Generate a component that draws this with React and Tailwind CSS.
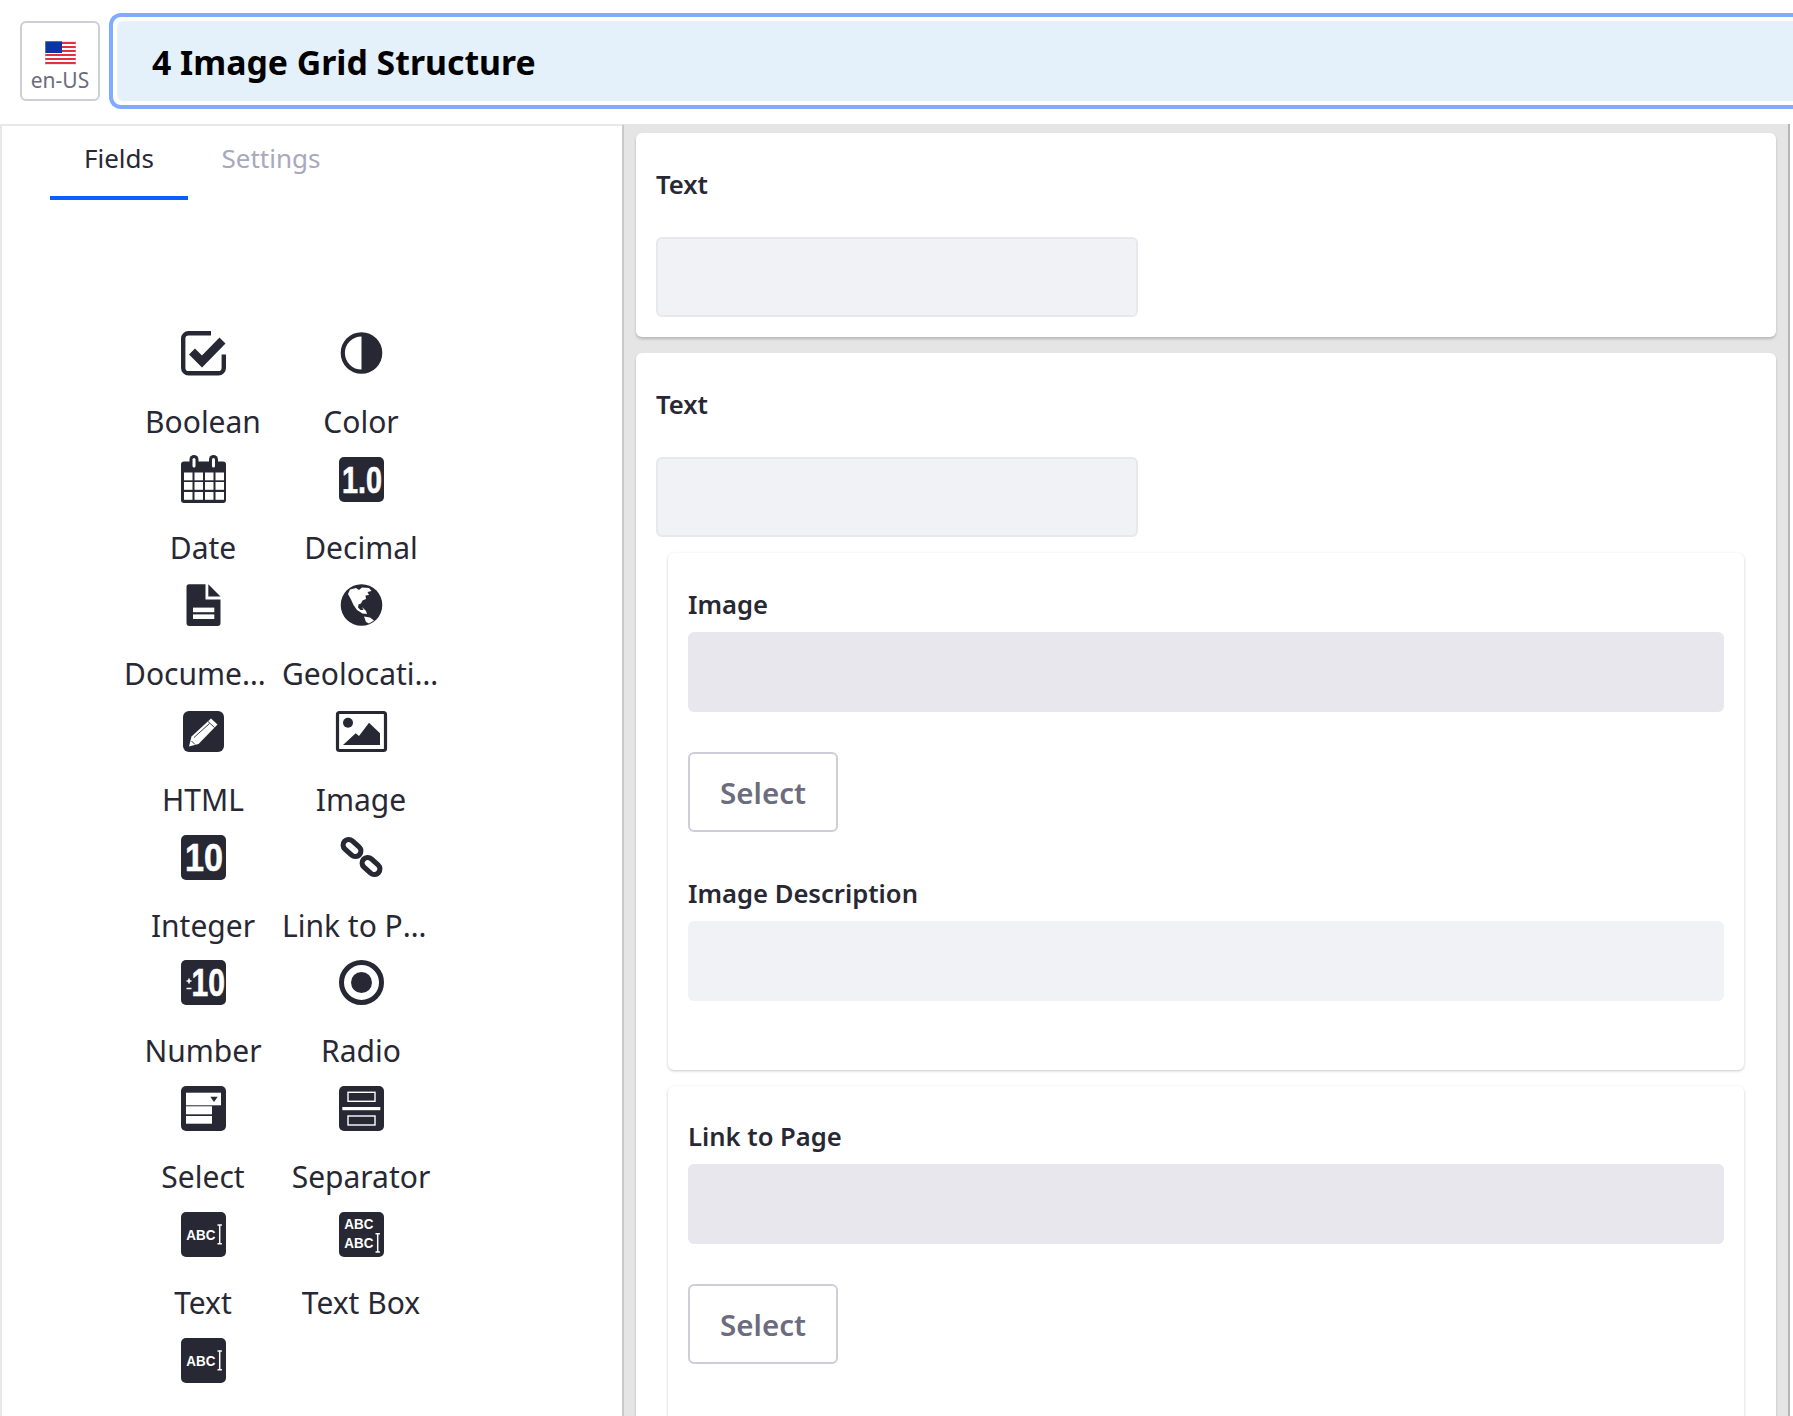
const D = "#272833";

function Svg({ children }) {
  return (
    <svg width="45" height="45" viewBox="0 0 45 45" className="overflow-visible block" fill={D}>
      {children}
    </svg>
  );
}
const Sq = ({ x = 0, s = 45, y = 0 }) => <rect x={x} y={y} width={s} height={s} rx="5" fill={D} />;
const T = (p) => <text fill="#fff" fontFamily="Liberation Sans" fontWeight="700" lengthAdjust="spacingAndGlyphs" {...p} />;
const Big = (p) => <T stroke="#fff" strokeWidth="0.6" {...p} />;
const Cursor = ({ y1, y2 }) => (
  <path d={`M36.5 ${y1}h4.4M38.7 ${y1}V${y2}M36.5 ${y2}h4.4`} stroke="#fff" strokeWidth="1.5" fill="none" />
);

const icons = {
  boolean: (
    <Svg>
      <path d="M30 2.2H7.5a5.3 5.3 0 0 0-5.3 5.3v29.5a5.3 5.3 0 0 0 5.3 5.3h30a5.3 5.3 0 0 0 5.3-5.3V23.5" fill="none" stroke={D} strokeWidth="4.4" />
      <path d="M11 20.5L21 30.5L41.5 9.5" fill="none" stroke={D} strokeWidth="8.4" />
    </Svg>
  ),
  color: (
    <Svg>
      <circle cx="22.5" cy="22" r="18.7" fill="none" stroke={D} strokeWidth="4.2" />
      <path d="M22.5 3.3a18.7 18.7 0 0 1 0 37.4z" />
    </Svg>
  ),
  date: (
    <Svg>
      <rect x="0" y="4.5" width="45" height="41.5" rx="3" />
      <rect x="8.5" y="-2" width="9" height="13" rx="4.5" />
      <rect x="28" y="-2" width="9" height="13" rx="4.5" />
      <rect x="11.5" y="1" width="3" height="9.5" rx="1.5" fill="#fff" />
      <rect x="31" y="1" width="3" height="9.5" rx="1.5" fill="#fff" />
      {[15.5, 25, 35].map((y) =>
        [3, 13.5, 24, 34.5].map((x) => <rect key={`${x}-${y}`} x={x} y={y} width="8.5" height="7.8" fill="#fff" />)
      )}
    </Svg>
  ),
  decimal: (
    <Svg>
      <Sq />
      <Big x="3" y="36" fontSize="37" textLength="40">1.0</Big>
    </Svg>
  ),
  document: (
    <Svg>
      <path d="M8 1.3H24.5V16.5H39.5V40a3 3 0 0 1-3 3H8.5a3 3 0 0 1-3-3V3.8a2.5 2.5 0 0 1 2.5-2.5z" />
      <path d="M27.3 1.3L39.5 13.5H27.3z" />
      <rect x="12" y="24.6" width="21.3" height="4.6" fill="#fff" />
      <rect x="12" y="31.4" width="21.3" height="4.6" fill="#fff" />
    </Svg>
  ),
  geo: (
    <Svg>
      <circle cx="22.5" cy="22" r="20.8" />
      <path d="M11 6.5L17 5L20 7L23 4.5L30 5L32.5 8L28.5 9L30 12L26.5 12.5L27 16L23.5 17.5L22 20.5L19.5 21.5L19 24.5L21.5 27L24.5 27L23 24L27 28L28 31L23.5 30.5L18 27L14.5 22L12 16.5L9 11z" fill="#fff" />
      <path d="M25 33.5L31 34.5L35 37.5L30 40.5L27 39z" fill="#fff" />
    </Svg>
  ),
  html: (
    <Svg>
      <rect x="2" y="2" width="41" height="41" rx="6" />
      <path d="M8 37.5L10.5 27.5L30 9.5L36.5 15.5L17.5 35z" fill="#fff" />
      <path d="M13 28.5L28.5 14.5M27 12.5L33.5 18.5M10.5 32L14 35.5" stroke={D} strokeWidth="0.9" fill="none" />
    </Svg>
  ),
  image: (
    <Svg>
      <rect x="-1.5" y="3.5" width="48" height="38" rx="2" fill="none" stroke={D} strokeWidth="3.2" />
      <circle cx="9" cy="13.7" r="5" />
      <path d="M4 36L16.7 24.3L20 27L30 13.7L41 24.3V36z" />
    </Svg>
  ),
  integer: (
    <Svg>
      <Sq />
      <Big x="4" y="36" fontSize="38" textLength="38">10</Big>
    </Svg>
  ),
  link: (
    <Svg>
      <rect x="3" y="7.5" width="20" height="11" rx="5.5" transform="rotate(42 13 13)" fill="none" stroke={D} strokeWidth="5.2" />
      <rect x="22" y="25.5" width="20" height="11" rx="5.5" transform="rotate(42 32 31)" fill="none" stroke={D} strokeWidth="5.2" />
    </Svg>
  ),
  number: (
    <Svg>
      <Sq />
      <Big x="10.5" y="36" fontSize="38" textLength="33.5">10</Big>
      <path d="M5.5 21h5M8 18.5v5M5.5 28.5h5" stroke="#fff" strokeWidth="1.6" fill="none" />
    </Svg>
  ),
  radio: (
    <Svg>
      <circle cx="22.5" cy="22.5" r="20" fill="none" stroke={D} strokeWidth="5" />
      <circle cx="22.5" cy="22.5" r="10.5" />
    </Svg>
  ),
  select: (
    <Svg>
      <Sq />
      <rect x="5" y="6.7" width="35" height="12.6" fill="#fff" />
      <path d="M29.3 10.7h7.4l-3.7 5.3z" />
      <rect x="5" y="20.3" width="26" height="8" fill="#fff" />
      <rect x="5" y="30" width="26" height="7.7" fill="#fff" />
    </Svg>
  ),
  separator: (
    <Svg>
      <Sq />
      <rect x="9" y="6.3" width="27" height="9" fill="none" stroke="#fff" strokeWidth="1.4" />
      <rect x="3.3" y="21" width="38" height="3.2" fill="#fff" />
      <rect x="9" y="30" width="27" height="9" fill="none" stroke="#fff" strokeWidth="1.4" />
    </Svg>
  ),
  text: (
    <Svg>
      <Sq />
      <T x="5.3" y="27.5" fontSize="15" textLength="29">ABC</T>
      <Cursor y1={13} y2={31.7} />
    </Svg>
  ),
  textbox: (
    <Svg>
      <Sq />
      <T x="5.3" y="17.3" fontSize="15" textLength="29">ABC</T>
      <T x="5.3" y="36" fontSize="15" textLength="29">ABC</T>
      <Cursor y1={21.7} y2={40} />
    </Svg>
  ),
};

const fields = [
  ["boolean", "Boolean"],
  ["color", "Color"],
  ["date", "Date"],
  ["decimal", "Decimal"],
  ["document", "Documents and Media"],
  ["geo", "Geolocation"],
  ["html", "HTML"],
  ["image", "Image"],
  ["integer", "Integer"],
  ["link", "Link to Page"],
  ["number", "Number"],
  ["radio", "Radio"],
  ["select", "Select"],
  ["separator", "Separator"],
  ["text", "Text"],
  ["textbox", "Text Box"],
  ["text", ""],
];

function Field({ icon, label }) {
  return (
    <div className="h-[125.9px] w-[158px]">
      <div className="flex justify-center">{icons[icon]}</div>
      {label && (
        <div className="mt-[26px] truncate text-center text-[30px] leading-[40px] text-[#272833]">{label}</div>
      )}
    </div>
  );
}

const Label = ({ children, className = "" }) => (
  <div className={`text-[25.6px] font-semibold leading-[32px] text-[#272833] ${className}`}>{children}</div>
);
const Input = ({ className = "" }) => (
  <div className={`h-[80px] rounded-md border-2 border-[#e7e7ed] bg-[#f1f2f5] ${className}`} />
);
const SelectBtn = ({ className = "" }) => (
  <div className={`flex h-[80px] w-[150px] items-center justify-center rounded-md border-2 border-[#cdced9] bg-white pt-[2px] text-[29.5px] font-semibold text-[#6b6c7e] ${className}`}>
    Select
  </div>
);

export default function App() {
  return (
    <div className="flex h-[1416px] w-[1793px] flex-col overflow-hidden bg-white font-['Noto_Sans',sans-serif]">
      <header className="flex h-[124px] shrink-0 items-center pb-[3px]">
        <div className="ml-[20px] flex h-[80px] w-[80px] shrink-0 flex-col items-center rounded-md border-2 border-[#cdced9] pt-[18px]">
          <svg width="31" height="24" viewBox="0 0 31 24" className="block">
            <rect width="31" height="24" fill="#fff" />
            {[0, 4, 8, 12, 16, 20].map((y) => (
              <rect key={y} y={y + 1} width="31" height="2" fill="#e0323c" />
            ))}
            <rect width="17" height="12" fill="#0b34a4" />
            <rect width="31" height="24" fill="none" stroke="#c9c9d2" strokeWidth="0.8" />
          </svg>
          <div className="mt-[1px] text-[21px] leading-[28px] text-[#6b6c7e]">en-US</div>
        </div>
        <div className="ml-[9px] h-[96px] flex-1 rounded-l-xl border-y-4 border-l-4 border-[#80acff] p-1 pr-0">
          <div className="flex h-full items-center rounded-l-md bg-[#e4f0fa] pl-[35px] pt-[4px] text-[33.8px] font-bold text-black">
            4 Image Grid Structure
          </div>
        </div>
      </header>
      <div className="flex min-h-0 flex-1">
        <aside className="w-[624px] shrink-0 border-t-2 border-l-2 border-r-2 border-t-[#e7e7ed] border-l-[#e7e7ed] border-r-[#c8c8c8]">
          <nav className="ml-[48px] flex h-[74px] text-[26px]">
            <div className="flex w-[138px] items-center justify-center border-b-4 border-[#0b5fff] pb-[6px] text-[#272833]">Fields</div>
            <div className="flex w-[166px] items-center justify-center pb-[10px] text-[#a7a9bc]">Settings</div>
          </nav>
          <div className="ml-[122px] mt-[131px] grid grid-cols-[158px_158px]">
            {fields.map(([icon, label], i) => (
              <Field key={i} icon={icon} label={label} />
            ))}
          </div>
        </aside>
        <main className="mr-[3px] flex min-w-0 flex-1 flex-col gap-4 overflow-hidden border-r-2 border-[#b5b5b5] bg-[#e5e5e5] pl-3 pr-3 pt-[9px]">
          <section className="h-[204px] shrink-0 rounded-md bg-white px-5 pt-[36px] shadow-[0_2px_3px_rgba(0,0,0,0.2)]">
            <Label>Text</Label>
            <Input className="mt-[36px] w-[482px]" />
          </section>
          <section className="shrink-0 rounded-md bg-white pt-[36px] shadow-[0_2px_3px_rgba(0,0,0,0.2)]">
            <Label className="px-5">Text</Label>
            <Input className="ml-5 mt-[36px] w-[482px]" />
            <div className="mx-8 mt-4 flex flex-col gap-4">
              <div className="h-[517px] rounded-md bg-white px-5 pt-[36px] shadow-[0_1px_3px_rgba(0,0,0,0.22)]">
                <Label>Image</Label>
                <div className="mt-[11px] h-[80px] rounded-md bg-[#e7e7ed]" />
                <SelectBtn className="mt-[40px]" />
                <Label className="mt-[46px]">Image Description</Label>
                <div className="mt-[11px] h-[80px] rounded-md bg-[#f1f2f5]" />
              </div>
              <div className="h-[400px] rounded-md bg-white px-5 pt-[35px] shadow-[0_1px_3px_rgba(0,0,0,0.22)]">
                <Label>Link to Page</Label>
                <div className="mt-[11px] h-[80px] rounded-md bg-[#e7e7ed]" />
                <SelectBtn className="mt-[40px]" />
              </div>
            </div>
          </section>
        </main>
      </div>
    </div>
  );
}
